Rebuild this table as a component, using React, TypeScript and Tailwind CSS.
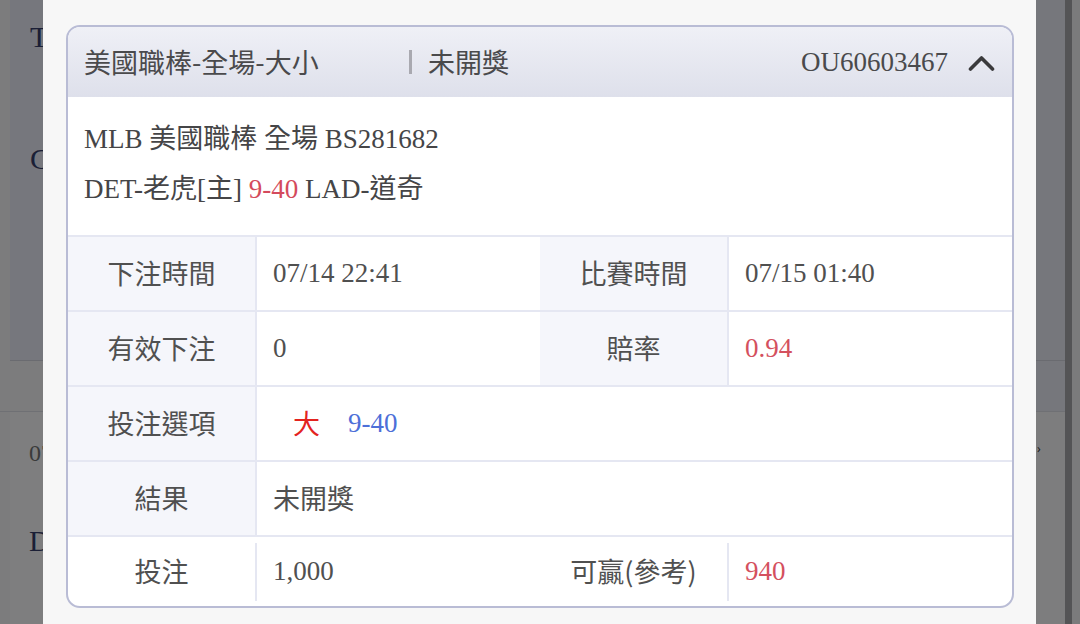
const cjk = "font-['Noto_Sans_CJK_TC','Noto_Sans',sans-serif]";
const mixed = "font-['Liberation_Serif','Noto_Sans_CJK_TC',serif]";

const LeftBackdrop = () => {
  return (
    <div className="w-[43px] shrink-0 h-full bg-[#7c7c7d] overflow-hidden flex flex-col">
      <div className="h-[361px] shrink-0 ml-[10px] bg-[#76777d] border-b border-[#6a6b70] pt-[22px] pl-[20px] text-[30px] leading-[30px] text-[#1b1f36] font-['Liberation_Serif',serif] whitespace-nowrap">
        <div>Time</div>
        <div className="mt-[92px]">Cat</div>
      </div>
      <div className="h-[51px] shrink-0 border-b border-[#6f7074]"></div>
      <div className="flex-1 ml-[10px] bg-[#7e7e7f] pl-[19px] font-['Liberation_Serif',serif] whitespace-nowrap">
        <div className="mt-[26px] text-[24px] leading-[30px] text-[#3a3a3a]">07</div>
        <div className="mt-[58px] text-[30px] leading-[30px] text-[#1b1f36]">Date</div>
      </div>
    </div>
  );
};

const RightBackdrop = () => {
  return (
    <div className="w-[44px] shrink-0 h-full flex">
      <div className="w-[29px] flex flex-col bg-[#76777c]">
        <div className="h-[361px] shrink-0 border-b border-[#6a6b70]"></div>
        <div className="h-[51px] shrink-0 border-b border-[#6f7074]"></div>
        <div className="flex-1 bg-[#7d7d7e] pt-[30px] pl-[1px] text-[12px] leading-[14px] text-[#222]">›</div>
      </div>
      <div className="w-[7px] bg-[#545456]"></div>
      <div className="flex-1 bg-[#7b7b7c]"></div>
    </div>
  );
};

const ChevronUpIcon = () => (
  <svg width="27" height="18" viewBox="0 0 27 18" fill="none">
    <path d="M2.5 15 L13.5 4 L24.5 15" stroke="#3a3a3c" strokeWidth="3.6" strokeLinecap="round" strokeLinejoin="round" />
  </svg>
);

const Label = ({ children, white = false }: { children: React.ReactNode; white?: boolean }) => (
  <div className={`${white ? "bg-white" : "bg-[#f5f6fb]"} flex items-center justify-center text-[27px] text-[#505050] ${cjk}`}>
    {children}
  </div>
);

const Value = ({ children, className = "" }: { children: React.ReactNode; className?: string }) => (
  <div className={`border-l-2 border-[#e5e7f2] flex items-center pl-[16px] text-[27px] text-[#505050] ${mixed} ${className}`}>
    {children}
  </div>
);

export default function App() {
  return (
    <div className="w-[1080px] h-[624px] overflow-hidden flex">
      <LeftBackdrop />

      {/* Modal body */}
      <div className="flex-1 h-full bg-[#f7f7f7] pt-[25px] pl-[23px]">
        <div className="w-[948px] rounded-[14px] border-2 border-[#b9bcd5] bg-white overflow-hidden">
          {/* Header */}
          <div className="h-[70px] bg-linear-to-b from-[#eff0f6] to-[#dee0eb] flex items-center pl-[16px] pr-[17px]">
            <div className={`w-[325px] text-[27px] text-[#4a4a4c] ${cjk}`}>美國職棒-全場-大小</div>
            <div className="w-[3px] h-[24px] bg-[#a9a9b0]"></div>
            <div className={`ml-[16px] text-[27px] text-[#4a4a4c] ${cjk}`}>未開獎</div>
            <div className="ml-auto text-[27px] text-[#4a4a4c] font-['Liberation_Serif',serif]">OU60603467</div>
            <div className="ml-[20px] mt-[2px]">
              <ChevronUpIcon />
            </div>
          </div>

          {/* Match info */}
          <div className={`h-[138px] pl-[16px] pt-[17px] text-[27px] leading-[50px] text-[#454547] ${mixed}`}>
            <div>MLB 美國職棒 全場 BS281682</div>
            <div>
              DET-老虎[主] <span className="text-[#d44a5c]">9-40</span> LAD-道奇
            </div>
          </div>

          {/* Detail table */}
          <div className="grid grid-cols-[187px_285px_187px_1fr] h-[75px] border-t-2 border-[#e5e7f2]">
            <Label>下注時間</Label>
            <Value>07/14 22:41</Value>
            <Label>比賽時間</Label>
            <Value>07/15 01:40</Value>
          </div>
          <div className="grid grid-cols-[187px_285px_187px_1fr] h-[75px] border-t-2 border-[#e5e7f2]">
            <Label>有效下注</Label>
            <Value>0</Value>
            <Label>賠率</Label>
            <Value className="text-[#d4505e]">0.94</Value>
          </div>
          <div className="grid grid-cols-[187px_1fr] h-[75px] border-t-2 border-[#e5e7f2]">
            <Label>投注選項</Label>
            <Value className="pl-[36px]">
              <span className={`text-[#e3231f] ${cjk}`}>大</span>
              <span className="ml-[28px] text-[#4d6fd8]">9-40</span>
            </Value>
          </div>
          <div className="grid grid-cols-[187px_1fr] h-[75px] border-t-2 border-[#e5e7f2]">
            <Label>結果</Label>
            <Value>
              <span className={cjk}>未開獎</span>
            </Value>
          </div>
          <div className="grid grid-cols-[187px_285px_187px_1fr] h-[71px] border-t-2 border-[#e5e7f2] items-center">
            <Label white>投注</Label>
            <Value className="h-[58px]">1,000</Value>
            <Label white>可贏(參考)</Label>
            <Value className="h-[58px] text-[#d4505e]">940</Value>
          </div>
        </div>
      </div>

      <RightBackdrop />
    </div>
  );
}
